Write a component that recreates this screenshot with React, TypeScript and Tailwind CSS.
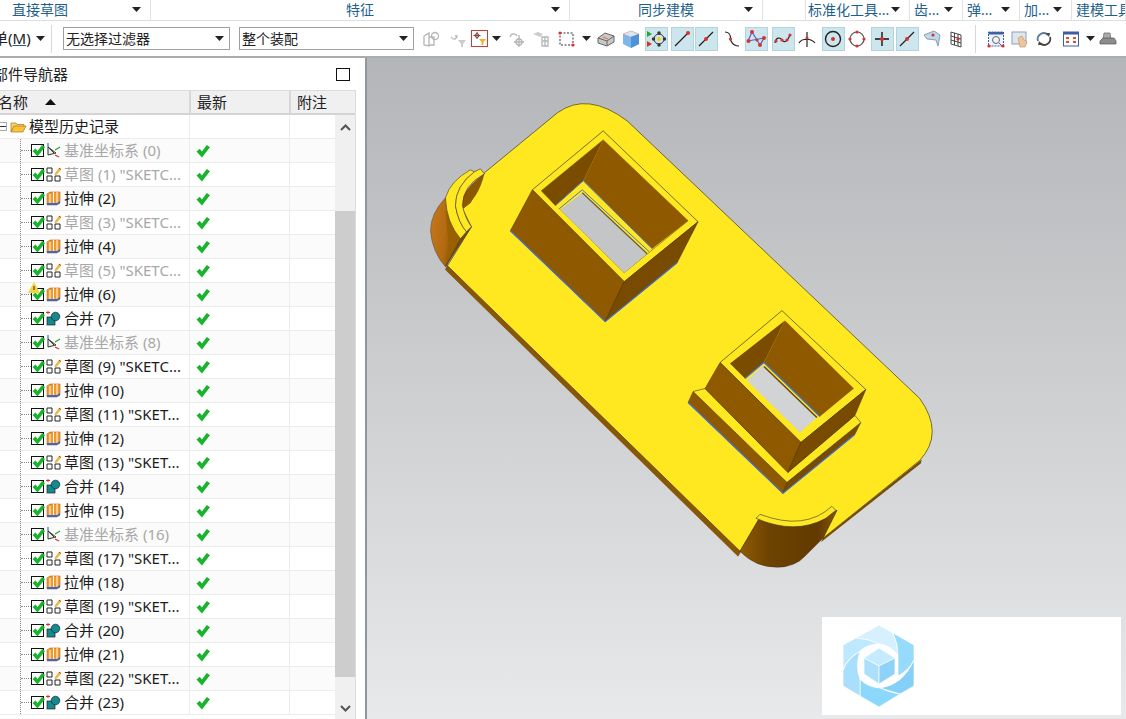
import React from "react";

const ribbon = [
  { w: 151, label: "直接草图", pad: "pl-3", arrow: true },
  { w: 419, label: "特征", pad: "justify-center", arrow: true },
  { w: 193, label: "同步建模", pad: "justify-center", arrow: true },
  { w: 43, label: "", pad: "", arrow: false },
  { w: 104, label: "标准化工具...", pad: "pl-0.5", arrow: true },
  { w: 53, label: "齿...", pad: "pl-1", arrow: true },
  { w: 57, label: "弹...", pad: "pl-1", arrow: true },
  { w: 52, label: "加...", pad: "pl-1", arrow: true },
  { w: 54, label: "建模工具", pad: "pl-1", arrow: false },
];

const rows = [
  { n: "基准坐标系 (0)", t: "csys", dim: true },
  { n: '草图 (1) "SKETC...', t: "sketch", dim: true },
  { n: "拉伸 (2)", t: "extrude" },
  { n: '草图 (3) "SKETC...', t: "sketch", dim: true },
  { n: "拉伸 (4)", t: "extrude" },
  { n: '草图 (5) "SKETC...', t: "sketch", dim: true },
  { n: "拉伸 (6)", t: "extrude", warn: true },
  { n: "合并 (7)", t: "merge" },
  { n: "基准坐标系 (8)", t: "csys", dim: true },
  { n: '草图 (9) "SKETC...', t: "sketch" },
  { n: "拉伸 (10)", t: "extrude" },
  { n: '草图 (11) "SKET...', t: "sketch" },
  { n: "拉伸 (12)", t: "extrude" },
  { n: '草图 (13) "SKET...', t: "sketch" },
  { n: "合并 (14)", t: "merge" },
  { n: "拉伸 (15)", t: "extrude" },
  { n: "基准坐标系 (16)", t: "csys", dim: true },
  { n: '草图 (17) "SKET...', t: "sketch" },
  { n: "拉伸 (18)", t: "extrude" },
  { n: '草图 (19) "SKET...', t: "sketch" },
  { n: "合并 (20)", t: "merge" },
  { n: "拉伸 (21)", t: "extrude" },
  { n: '草图 (22) "SKET...', t: "sketch" },
  { n: "合并 (23)", t: "merge" },
];

const Caret = ({ className = "" }: { className?: string }) => (
  <svg width="9" height="5" viewBox="0 0 9 5" className={className}>
    <path d="M0 0h9L4.500 5z" fill="#222" />
  </svg>
);

const Dot = ({ x, y, r = 1.6 }: { x: number; y: number; r?: number }) => (
  <circle cx={x} cy={y} r={r} fill="#d8322c" />
);

const Tool = ({ kind }: { kind: string }) => {
  const s = { fill: "none", stroke: "#222", strokeWidth: 1.2 };
  const g = { fill: "none", stroke: "#b5b5b5", strokeWidth: 1.3 };
  switch (kind) {
    case "gray1":
      return (
        <svg width="20" height="20" viewBox="0 0 20 20">
          <path d="M3 7l5-3v13l-5-1zM8 8h5v8H8" {...g} />
          <circle cx="14" cy="7" r="3.500" {...g} />
        </svg>
      );
    case "gray2":
      return (
        <svg width="20" height="20" viewBox="0 0 20 20">
          <path d="M3 8c2 3 5 3 6-1l-2 0" {...g} />
          <path d="M10 11h8l-3 4v3h-2v-3z" fill="#ccc" />
        </svg>
      );
    case "filter":
      return (
        <svg width="17" height="17" viewBox="0 0 17 17">
          <rect x="0.500" y="0.500" width="16" height="16" fill="#fff" stroke="#d03a34" />
          <path d="M6 2v7M2.500 5.500h7" stroke="#555" />
          <circle cx="6" cy="5.500" r="2" fill="none" stroke="#a33" />
          <path d="M8 9h7l-2.500 3v3h-2v-3z" fill="#f0b429" />
        </svg>
      );
    case "gray3":
      return (
        <svg width="20" height="20" viewBox="0 0 20 20">
          <path d="M3 8c1-4 6-4 7-1" {...g} />
          <path d="M12 6v12M7 13h10" {...g} />
          <circle cx="12" cy="13" r="3" {...g} />
        </svg>
      );
    case "gray4":
      return (
        <svg width="20" height="20" viewBox="0 0 20 20">
          <path d="M2 5l5-2 5 2-3 3z" fill="#ccc" />
          <path d="M11 8h6v9h-6zM11 12h6M14 8v9" {...g} />
        </svg>
      );
    case "marquee":
      return (
        <svg width="18" height="18" viewBox="0 0 18 18">
          <rect x="2" y="3" width="13" height="12" fill="none" stroke="#333" strokeDasharray="2 1.500" />
          <Dot x={2} y={3} />
          <Dot x={15} y={15} />
        </svg>
      );
    case "box":
      return (
        <svg width="20" height="20" viewBox="0 0 20 20">
          <path d="M2 9l7-5 9 3v6l-7 4-9-3z" fill="#c8c8c8" stroke="#666" />
          <path d="M2 9l9 3 7-5M11 12v5" fill="none" stroke="#666" />
          <path d="M7 8l5 2" stroke="#e2703a" />
        </svg>
      );
    case "cube":
      return (
        <svg width="20" height="20" viewBox="0 0 20 20">
          <path d="M2 5l8-3 8 3v10l-8 4-8-4z" fill="#7db7ea" />
          <path d="M2 5l8 3 8-3-8-3z" fill="#d9e8f5" stroke="#e39a8f" strokeWidth=".6" />
          <path d="M10 8v11l8-4V5z" fill="#4d93da" />
        </svg>
      );
    case "snap":
      return (
        <svg width="21" height="20" viewBox="0 0 21 20">
          <path d="M1 2l5 3-5 3z" fill="#2aa52a" />
          <path d="M1 12l5 3-5 3z" fill="#d8322c" />
          <circle cx="13" cy="10" r="5" fill="none" stroke="#333" />
          <circle cx="13" cy="10" r="2" fill="#f0d020" />
          <circle cx="13" cy="4" r="1.700" fill="#333" />
          <circle cx="13" cy="16" r="1.700" fill="#333" />
          <circle cx="7.500" cy="10" r="1.700" fill="#333" />
          <circle cx="18.500" cy="10" r="1.700" fill="#333" />
        </svg>
      );
    case "lineEnd":
      return (
        <svg width="18" height="18" viewBox="0 0 18 18">
          <path d="M2 16L15 3" {...s} />
          <Dot x={15} y={3} r={2} />
        </svg>
      );
    case "lineMid":
      return (
        <svg width="18" height="18" viewBox="0 0 18 18">
          <path d="M2 16L16 2" {...s} />
          <Dot x={9} y={9} r={2} />
        </svg>
      );
    case "scurve":
      return (
        <svg width="18" height="18" viewBox="0 0 18 18">
          <path d="M2 2c7 0 5 7 6 9s3 5 8 5" {...s} />
          <Dot x={7.500} y={9} />
        </svg>
      );
    case "poly":
      return (
        <svg width="20" height="20" viewBox="0 0 20 20">
          <path d="M2 12L6 3l5 8 3 5 4-7z" fill="none" stroke="#5560c8" strokeWidth="1.200" />
          <Dot x={2.500} y={12} r={2} />
          <Dot x={6} y={3} r={2} />
          <Dot x={11} y={11} />
          <Dot x={14} y={16} r={2} />
          <Dot x={18} y={9} r={2} />
        </svg>
      );
    case "spline":
      return (
        <svg width="20" height="20" viewBox="0 0 20 20">
          <path d="M2 14c1-6 5-6 7-3s5 2 8-5" fill="none" stroke="#222" strokeWidth="1.200" />
          <Dot x={3} y={12} />
          <Dot x={9} y={11} />
          <Dot x={14} y={11} />
          <Dot x={17} y={6} />
        </svg>
      );
    case "arc":
      return (
        <svg width="20" height="20" viewBox="0 0 20 20">
          <path d="M2 14c3-5 12-5 16 0M10 3v15" {...s} />
          <Dot x={10} y={9} />
        </svg>
      );
    case "circleC":
      return (
        <svg width="20" height="20" viewBox="0 0 20 20">
          <circle cx="10" cy="10" r="7.500" fill="none" stroke="#222" strokeWidth="1.400" />
          <Dot x={10} y={10} r={2} />
        </svg>
      );
    case "circleQ":
      return (
        <svg width="20" height="20" viewBox="0 0 20 20">
          <circle cx="10" cy="10" r="7" fill="none" stroke="#555" strokeWidth="1.200" />
          <Dot x={10} y={3} />
          <Dot x={10} y={17} />
          <Dot x={3} y={10} />
          <Dot x={17} y={10} />
        </svg>
      );
    case "plus":
      return (
        <svg width="18" height="18" viewBox="0 0 18 18">
          <path d="M9 2v14M2 9h14" stroke="#111" strokeWidth="1.400" />
          <Dot x={9} y={9} r={2} />
        </svg>
      );
    case "face":
      return (
        <svg width="20" height="20" viewBox="0 0 20 20">
          <path d="M2 6l10-4 6 4-2 11-2-6-9-1z" fill="#bcd9ef" stroke="#8e9cab" />
          <Dot x={11} y={6} />
        </svg>
      );
    case "grid":
      return (
        <svg width="18" height="18" viewBox="0 0 18 18">
          <path d="M4 2l10 3v12L4 14zM7.500 3v12M11 4v12M4 6l10 3M4 10l10 3" fill="none" stroke="#333" strokeWidth=".9" />
          <Dot x={11} y={9} />
        </svg>
      );
    case "fitA":
      return (
        <svg width="18" height="18" viewBox="0 0 18 18">
          <rect x="1.500" y="2" width="15" height="14" fill="#eef3f8" stroke="#3d5fa8" strokeDasharray="2 1" />
          <rect x="1.500" y="2" width="15" height="2.500" fill="#3d5fa8" />
          <circle cx="9" cy="10" r="3.500" fill="none" stroke="#666" />
          <path d="M12 13l3 3" stroke="#666" />
          <Dot x={2} y={16} />
          <Dot x={16} y={16} />
        </svg>
      );
    case "pan":
      return (
        <svg width="18" height="18" viewBox="0 0 18 18">
          <rect x="1" y="2" width="14" height="12" fill="#dfe6ee" stroke="#8b9fb5" />
          <path d="M7 8l4-2 2 4 3 2-2 5h-5z" fill="#ecc69a" stroke="#b98e5e" strokeWidth=".6" />
        </svg>
      );
    case "rotate":
      return (
        <svg width="18" height="18" viewBox="0 0 18 18">
          <path d="M3 11a6 6 0 0 1 10-6" fill="none" stroke="#5b7a9c" strokeWidth="1.800" />
          <path d="M15 7a6 6 0 0 1-10 6" fill="none" stroke="#444" strokeWidth="1.800" />
          <path d="M11 3l4 0-1 4zM7 15l-4 0 1-4z" fill="#444" />
        </svg>
      );
    case "layout":
      return (
        <svg width="18" height="18" viewBox="0 0 18 18">
          <rect x="1.500" y="2" width="15" height="14" fill="#fff" stroke="#3d5fa8" />
          <rect x="1.500" y="2" width="15" height="2.500" fill="#3d5fa8" />
          <path d="M4 7h3v2H4zM11 7h3v2h-3zM4 11h3v2H4zM11 11h3v2h-3z" fill="#d8502c" />
        </svg>
      );
    case "printer":
      return (
        <svg width="18" height="18" viewBox="0 0 18 18">
          <path d="M5 3h6l1 6H4z" fill="#aaa" stroke="#666" strokeWidth=".7" />
          <path d="M1 11l3-3h11l2 3v3H1z" fill="#8c8c8c" stroke="#555" strokeWidth=".7" />
        </svg>
      );
    default:
      return null;
  }
};

// x = centre of the icon in the toolbar, on = blue chip behind it
const tools = [
  { k: "gray1", x: 431 },
  { k: "gray2", x: 458 },
  { k: "filter", x: 479 },
  { k: "caret", x: 496 },
  { k: "gray3", x: 517 },
  { k: "gray4", x: 541 },
  { k: "marquee", x: 567 },
  { k: "caret", x: 586 },
  { k: "box", x: 606 },
  { k: "cube", x: 631 },
  { k: "snap", x: 656, on: true },
  { k: "lineEnd", x: 682, on: true },
  { k: "lineMid", x: 706, on: true },
  { k: "scurve", x: 732 },
  { k: "poly", x: 756, on: true },
  { k: "spline", x: 783, on: true },
  { k: "arc", x: 807 },
  { k: "circleC", x: 833, on: true },
  { k: "circleQ", x: 857 },
  { k: "plus", x: 882, on: true },
  { k: "lineMid", x: 907, on: true },
  { k: "face", x: 932 },
  { k: "grid", x: 956 },
  { k: "sep", x: 975 },
  { k: "fitA", x: 996 },
  { k: "pan", x: 1020 },
  { k: "rotate", x: 1044 },
  { k: "layout", x: 1071 },
  { k: "caret", x: 1090 },
  { k: "printer", x: 1108 },
];

const Toolbar = () => (
  <div className="flex h-[35px] items-center border-b-[2px] border-[#a9abad] bg-white box-content">
    <span className="ml-[-22px] w-[58px] shrink-0 whitespace-nowrap text-[15px] text-[#222]">
      菜单(<span className="underline decoration-[#1e5f8c]">M</span>)
    </span>
    <Caret className="shrink-0" />
    <div className="ml-[6px] h-[28px] w-px shrink-0 bg-[#d8d8d8]" />
    <div className="ml-[11px] flex h-[23px] w-[167px] shrink-0 items-center justify-between border border-[#a0a0a0] pl-[2px] pr-[5px] text-[14px] text-[#222]">
      无选择过滤器
      <Caret />
    </div>
    <div className="ml-[9px] flex h-[23px] w-[175px] shrink-0 items-center justify-between border border-[#a0a0a0] pl-[2px] pr-[5px] text-[14px] text-[#222]">
      整个装配
      <Caret />
    </div>
    <div className="ml-[5px] flex items-center">
      {tools.map((t, i) => (
        <div
          key={i}
          className="flex w-[24px] shrink-0 justify-center"
          style={{ marginLeft: i === 0 ? 0 : t.x - tools[i - 1].x - 24 }}>
          {t.k === "caret" && <Caret />}
          {t.k === "sep" && <div className="h-[28px] w-px bg-[#d8d8d8]" />}
          {t.k !== "caret" && t.k !== "sep" && (
            <div
              className={`flex h-[24px] w-[23px] shrink-0 items-center justify-center ${
                t.on ? "border border-[#b0d5e1] bg-[#cde6ee]" : ""
              }`}>
              <Tool kind={t.k} />
            </div>
          )}
        </div>
      ))}
    </div>
  </div>
);

const RowIcon = ({ t }: { t: string }) => {
  if (t === "sketch")
    return (
      <svg width="15" height="15" viewBox="0 0 15 15">
        <path d="M1 1h5v5H1zM1 9h5v5H1zM9 9h5v5H9z" fill="#fff" stroke="#222" />
        <path d="M9 6l4-5 2 1.500-4 5-2.500.5z" fill="#e9b93a" />
        <path d="M13 1l2 1.500" stroke="#c22" />
      </svg>
    );
  if (t === "extrude")
    return (
      <svg width="15" height="15" viewBox="0 0 15 15">
        <path d="M1 3l3-2h10v11l-3 2H1z" fill="#f09a2a" stroke="#b8641c" strokeWidth=".6" />
        <path d="M4 3v11M7.500 1v13M11 1v13" stroke="#fff" strokeWidth="1" />
        <path d="M1 12h10l3-2v2l-3 2H1z" fill="#3c66c8" />
      </svg>
    );
  if (t === "merge")
    return (
      <svg width="15" height="15" viewBox="0 0 15 15">
        <path d="M0 1.500h4M2 0v3" stroke="#d8322c" />
        <rect x="1" y="6" width="8" height="8" fill="#138a90" stroke="#222" strokeWidth=".7" />
        <circle cx="9.500" cy="5.500" r="4.300" fill="#138a90" stroke="#222" strokeWidth=".7" />
      </svg>
    );
  return (
    <svg width="15" height="15" viewBox="0 0 15 15">
      <path d="M2 4v8l8-2z" fill="#eee" stroke="#333" />
      <path d="M2 4l6 6" stroke="#333" />
      <path d="M2 0v4" stroke="#2244bb" />
      <path d="M9 7l5-3" stroke="#2aa52a" strokeWidth="1.300" />
      <path d="M9 12l4 2" stroke="#d8322c" strokeWidth="1.300" />
    </svg>
  );
};

const GreenCheck = ({ w = 13 }: { w?: number }) => (
  <svg width={w} height={w} viewBox="0 0 13 13">
    <path d="M0.500 7l3-2.500 2 2.500L10 1l3 2-7.500 9.500z" fill="#19b32f" />
  </svg>
);

const TreeRow = ({ r, i }: { r: (typeof rows)[number]; i: number }) => (
  <div className={`flex h-[24px] border-b border-[#ececec] ${i % 2 === 0 ? "bg-[#fbfbfb]" : "bg-white"}`}>
    <div className="flex w-[190px] shrink-0 items-center border-r border-[#ececec] pl-[20px]">
      <div className="h-full w-0 border-l border-dotted border-[#888]" />
      <div className="w-[10px] border-t border-dotted border-[#888]" />
      <div className="relative mr-[2px] h-[13px] w-[13px] shrink-0 border border-[#111] bg-white">
        <div className="absolute left-[0px] top-[-1px]">
          <GreenCheck w={13} />
        </div>
        {r.warn && (
          <svg width="12" height="11" viewBox="0 0 12 11" className="absolute left-[-4px] top-[-7px]">
            <path d="M6 0l6 11H0z" fill="#f2d33c" />
            <path d="M6 4v4" stroke="#333" />
          </svg>
        )}
      </div>
      <RowIcon t={r.t} />
      <span
        className={`ml-[3px] whitespace-nowrap text-[15px] ${r.dim ? "text-[#a8a8a8]" : "text-[#1c1c1c]"}`}>
        {r.n}
      </span>
    </div>
    <div className="flex w-[100px] shrink-0 items-center border-r border-[#ececec] pl-[6px]">
      <GreenCheck w={14} />
    </div>
    <div className="flex-1" />
  </div>
);

const Navigator = () => (
  <div className="flex w-[367px] shrink-0 flex-col border-r-[2px] border-[#8f979c] bg-white">
    <div className="flex h-[32px] items-center justify-between pr-[15px]">
      <span className="ml-[-22px] whitespace-nowrap text-[15px] text-[#222]">零部件导航器</span>
      <div className="h-[13px] w-[14px] border-[1.5px] border-[#111]" />
    </div>
    <div className="flex w-[356px] flex-1 flex-col overflow-hidden border-r border-t border-[#dcdcdc]">
      <div className="flex h-[24px] shrink-0 border-b-[2px] border-[#d4d4d4] bg-[#f0f0f0] text-[15px] text-[#222]">
        <div className="flex w-[191px] items-center border-r-[2px] border-[#d8d8d8] pl-[-2px]">
          <span className="ml-[-2px]">名称</span>
          <svg width="11" height="6" viewBox="0 0 11 6" className="ml-[17px]">
            <path d="M0 6h11L5.500 0z" fill="#111" />
          </svg>
        </div>
        <div className="flex w-[100px] items-center border-r-[2px] border-[#d8d8d8] pl-[6px]">最新</div>
        <div className="flex flex-1 items-center pl-[6px]">附注</div>
      </div>
      <div className="flex flex-1 overflow-hidden">
        <div className="w-[335px] shrink-0">
          <div className="flex h-[24px] border-b border-[#ececec] bg-white">
            <div className="flex w-[190px] shrink-0 items-center border-r border-[#ececec]">
              <div className="flex h-[9px] w-[7px] items-center border border-l-0 border-[#aaa]">
                <div className="h-px w-full bg-[#333]" />
              </div>
              <svg width="17" height="13" viewBox="0 0 17 13" className="ml-[3px]">
                <path d="M1 3h5l1 1.500h7v2H4L1 12z" fill="#f5d36a" stroke="#a87a1c" strokeWidth=".7" />
                <path d="M4 6h12l-3 6H1z" fill="#f8c53a" stroke="#a87a1c" strokeWidth=".7" />
              </svg>
              <span className="ml-[2px] whitespace-nowrap text-[15px] text-[#1c1c1c]">模型历史记录</span>
            </div>
            <div className="w-[100px] shrink-0 border-r border-[#ececec]" />
          </div>
          {rows.map((r, i) => (
            <TreeRow key={i} r={r} i={i} />
          ))}
        </div>
        <div className="flex w-[20px] shrink-0 flex-col bg-[#f0f0f0]">
          <div className="flex h-[96px] shrink-0 items-start justify-center pt-[9px]">
            <svg width="11" height="7" viewBox="0 0 11 7">
              <path d="M1 6l4.500-4.500L10 6" fill="none" stroke="#555" strokeWidth="2" />
            </svg>
          </div>
          <div className="h-[466px] shrink-0 bg-[#cdcdcd]" />
          <div className="flex flex-1 items-end justify-center pb-[7px]">
            <svg width="11" height="7" viewBox="0 0 11 7">
              <path d="M1 1l4.500 4.500L10 1" fill="none" stroke="#555" strokeWidth="2" />
            </svg>
          </div>
        </div>
      </div>
    </div>
  </div>
);

const Model = () => (
  <svg viewBox="367 57 759 662" className="h-full w-full" strokeLinejoin="round">
    <defs>
      <linearGradient id="clipL" x1="0" y1="0" x2="1" y2="0.3">
        <stop offset="0" stopColor="#c9781a" />
        <stop offset="0.6" stopColor="#b36a10" />
        <stop offset="1" stopColor="#8a5400" />
      </linearGradient>
      <linearGradient id="clipB" x1="0" y1="0" x2="1" y2="0">
        <stop offset="0" stopColor="#8f5a05" />
        <stop offset="0.3" stopColor="#6e4300" />
        <stop offset="0.8" stopColor="#623a00" />
        <stop offset="1" stopColor="#8a5600" />
      </linearGradient>
    </defs>
    {/* underside of the plate */}
    <path d="M447 264L445 269L738 556L741 551Z" fill="#8a5600" stroke="#5a3a00" strokeWidth=".4" />
    <path d="M823 538L821 542L921 463L922 459Z" fill="#7a4a00" />
    {/* left clip body */}
    <path d="M445 197Q430 213 430 230Q432 252 445 266L460 238Z" fill="url(#clipL)" stroke="#444" strokeWidth=".5" />
    <path d="M445 210L460 238L445 266L448 243Z" fill="#9a6000" />
    {/* plate top */}
    <path
      d="M484 172L557 112Q587 90 627 120L920 398Q945 433 920 460L823 538L837 510Q800 538 760 517L740 551L447 265L471 226L462 208L470 202Z"
      fill="#ffe81f"
      stroke="#3d3a20"
      strokeWidth=".7"
    />
    {/* left clip pocket and rims */}
    <path d="M484 173Q468 184 462 197L462 208Q478 198 484 173Z" fill="#8c5800" />
    <path d="M471 226L445 266L460 238Z" fill="#7a4a00" stroke="#333" strokeWidth=".4" />
    <path d="M445 197Q450 180 470 169L474 171Q455 185 455 205Q458 222 466 231L460 238Q446 222 445 197Z" fill="#ffe81f" stroke="#333" strokeWidth=".6" />
    <path d="M474 171L480 168L484 173Q462 185 462 205Q465 218 471 226L466 231Q458 222 455 205Q455 185 474 171Z" fill="#ffe81f" stroke="#333" strokeWidth=".6" />
    {/* bottom clip */}
    <path d="M760 517L740 551Q755 567 777 567Q795 567 805 556L823 538L837 510Q800 538 760 517Z" fill="url(#clipB)" stroke="#3a2500" strokeWidth=".4" />
    <path d="M760 514L756 518Q795 535 826 518L836 510L832 506Q805 531 760 514Z" fill="#ffe81f" stroke="#333" strokeWidth=".6" />

    {/* big boss */}
    <path d="M532 189L603 130L698 221L624 281Z" fill="#ffe81f" stroke="#3d3a20" strokeWidth=".7" />
    <path d="M532 189L624 281L605 321L510 230Z" fill="#8f5900" stroke="#3e2a00" strokeWidth=".5" />
    <path d="M624 281L698 221L677 262L605 321Z" fill="#794b00" stroke="#3e2a00" strokeWidth=".5" />
    <path d="M510 230L605 321L677 262" fill="none" stroke="#3f6fe0" strokeWidth="1.200" />
    <path d="M541 190L603 139L688 220L624 272Z" fill="#ffe81f" stroke="#3d3a20" strokeWidth=".5" />
    <path d="M603 139L688 220L652 248L583 180Z" fill="#8f5900" />
    <path d="M603 139L583 180L555 205L541 190Z" fill="#7a4c00" />
    <path d="M583 180L652 248L647 253L582 192L560 209L555 205Z" fill="#ffe81f" />
    <path d="M583 180L652 248M555 205L583 180" stroke="#3f6fe0" strokeWidth="1" fill="none" />
    <path d="M582 189L649 251M559 208L582 189" stroke="#3f6fe0" strokeWidth="1" fill="none" />
    <path d="M582 192L647 253L624 272L560 209Z" fill="#c3c5c7" />
    <path d="M582 192L647 253" stroke="#6b5a30" strokeWidth="1.200" />

    {/* small boss base */}
    <path d="M693 391L787 482L783 493L688 402Z" fill="#8f5900" stroke="#3e2a00" strokeWidth=".4" />
    <path d="M787 482L861 422L855 434L783 493Z" fill="#794b00" stroke="#3e2a00" strokeWidth=".4" />
    <path d="M688 402L783 493L855 434" fill="none" stroke="#3f6fe0" strokeWidth="1.200" />
    <path d="M705 388L693 391L787 482L861 422L855 415L788 472Z" fill="#ffe81f" stroke="#3d3a20" strokeWidth=".6" />
    {/* small boss */}
    <path d="M720 362L782 310L866 389L801 442Z" fill="#ffe81f" stroke="#3d3a20" strokeWidth=".7" />
    <path d="M720 362L801 442L788 472L705 388Z" fill="#8f5900" stroke="#3e2a00" strokeWidth=".5" />
    <path d="M801 442L866 389L855 415L788 472Z" fill="#794b00" stroke="#3e2a00" strokeWidth=".5" />
    <path d="M785 320L854 388L820 416L764 362Z" fill="#8f5900" />
    <path d="M785 320L764 362L745 378L730 363Z" fill="#7a4c00" />
    <path d="M763 365L817 417L800 432L747 380Z" fill="#d2d3d5" />
    <path d="M745 378L764 362L820 416" fill="none" stroke="#3f6fe0" strokeWidth="1.200" />
    <path d="M764 366L817 417" stroke="#6b4500" strokeWidth="1.500" />
  </svg>
);

const Logo = () => (
  <svg width="72" height="83" viewBox="0 0 72 83" stroke="#fff" strokeWidth=".7">
    <path d="M36 0L50 8Q55 18 55 30Q47 20 36 19Q24 13 13 13Z" fill="#d6f0ff" />
    <path d="M50 8L71 20V35Q66 45 55 51V30Q55 18 50 8Z" fill="#96dafc" />
    <path d="M71 35V61L57 69L37 63Q60 60 71 35Z" fill="#84d0f8" />
    <path d="M57 69L36 82L17 71V54Q24 62 37 63Q48 68 57 69Z" fill="#8cd8fc" />
    <path d="M17 71L0 61V46Q2 36 17 26Q12 42 17 54Z" fill="#a9dffc" />
    <path d="M0 44V20L13 13Q26 14 36 19Q24 19 17 26Q5 33 0 44Z" fill="#bde8fe" />
    <path d="M36 23L21 33L36 41L52 33Z" fill="#c5ebfe" />
    <path d="M21 33L36 41V59L21 49Z" fill="#acdffc" />
    <path d="M36 41L52 33V49L36 59Z" fill="#8ed2f8" />
  </svg>
);

export default function App() {
  return (
    <div className="flex h-[719px] w-[1126px] flex-col overflow-hidden bg-white font-['Noto_Sans','Noto_Sans_CJK_SC',sans-serif]">
      <div className="flex h-[21px] shrink-0 border-b border-[#dedede] bg-white">
        {ribbon.map((s, i) => (
          <div
            key={i}
            className={`relative flex shrink-0 items-center overflow-hidden border-r border-[#e2e2e2] ${s.pad}`}
            style={{ width: s.w }}>
            <span className="whitespace-nowrap text-[14px] leading-none text-[#1e5f8c]">{s.label}</span>
            {s.arrow && <Caret className="absolute right-[9px] top-[7px]" />}
          </div>
        ))}
      </div>
      <Toolbar />
      <div className="flex min-h-0 flex-1">
        <Navigator />
        <div className="relative min-w-0 flex-1 bg-linear-to-b from-[#b3b5b8] to-[#e8e9ea]">
          <Model />
          <div className="absolute left-[455px] top-[559px] flex h-[98px] w-[299px] items-center bg-white pl-[21px]">
            <Logo />
          </div>
        </div>
      </div>
    </div>
  );
}
